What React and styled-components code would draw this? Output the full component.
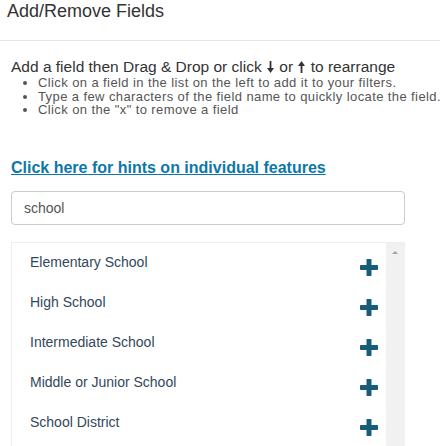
import React from 'react';
import styled, { createGlobalStyle } from 'styled-components';

const GlobalStyle = createGlobalStyle`
  body {
    margin: 0;
    background: #fff;
    font-family: "Liberation Sans", Arial, sans-serif;
  }
`;

const Page = styled.div`
  width: 440px;
  height: 446px;
  overflow: hidden;
`;

const Header = styled.div`
  height: 39px;
  padding: 1px 0 0 7px;
  border-bottom: 1px solid #e5e5e5;
`;

const Title = styled.h2`
  margin: 0;
  font-size: 18px;
  font-weight: normal;
  color: #333;
`;

const Body = styled.div`
  padding: 17px 0 0 11px;
`;

const Lead = styled.div`
  font-size: 15.5px;
  line-height: 18px;
  color: #333;
  white-space: nowrap;
`;

const Arrow = styled.svg`
  width: 7px;
  height: 12px;
  margin: 0 1px;
  vertical-align: -1px;
  fill: #333;
`;

const Hints = styled.ul`
  margin: 0;
  padding-left: 27px;
  font-size: 13px;
  line-height: 13.6px;
  letter-spacing: 0.4px;
  color: #555;
  white-space: nowrap;
`;

const Link = styled.a`
  display: block;
  margin-top: 42px;
  font-size: 16px;
  line-height: 18px;
  font-weight: bold;
  color: #0b78a8;
  text-decoration: underline;
`;

const Search = styled.input`
  display: block;
  box-sizing: border-box;
  width: 394px;
  height: 34px;
  margin-top: 14px;
  padding: 0 12px;
  border: 1px solid #ccc;
  border-radius: 4px;
  font-family: inherit;
  font-size: 14px;
  color: #555;
  outline: none;
`;

const ListBox = styled.div`
  display: flex;
  width: 394px;
  height: 240px;
  margin-top: 17px;
  box-sizing: border-box;
  border: 1px solid #eee;
`;

const Items = styled.div`
  flex: 1;
`;

const Row = styled.div`
  display: flex;
  justify-content: space-between;
  align-items: flex-start;
  height: 40px;
  padding: 0 8px 0 18px;
`;

const Name = styled.span`
  margin-top: 11px;
  font-size: 14px;
  line-height: 16px;
  color: #33475b;
`;

const Plus = styled.svg`
  margin-top: 16px;
  width: 18px;
  height: 17px;
  fill: #175d78;
`;

const Scrollbar = styled.div`
  width: 18px;
  background: #f1f1f1;
  display: flex;
  justify-content: center;
  padding-top: 8px;
  box-sizing: border-box;
`;

const UpArrow = styled.div`
  width: 0;
  height: 0;
  border-left: 3.5px solid transparent;
  border-right: 3.5px solid transparent;
  border-bottom: 3.5px solid #a3a3a3;
`;

const fields = [
  'Elementary School',
  'High School',
  'Intermediate School',
  'Middle or Junior School',
  'School District',
];

function PlusIcon() {
  return (
    <Plus viewBox="0 0 18 17">
      <rect x="6.5" y="0" width="5" height="17" rx="0.8" />
      <rect x="0" y="6" width="18" height="5" rx="0.8" />
    </Plus>
  );
}

function LongArrow({ up }) {
  return (
    <Arrow viewBox="0 0 7 12">
      <g transform={up ? 'rotate(180 3.5 6)' : undefined}>
        <rect x="2.6" y="0" width="1.8" height="8" />
        <path d="M0 7 L7 7 L3.5 12 Z" />
      </g>
    </Arrow>
  );
}

export default function App() {
  return (
    <Page>
      <GlobalStyle />
      <Header>
        <Title>Add/Remove Fields</Title>
      </Header>
      <Body>
        <Lead>
          Add a field then Drag &amp; Drop or click <LongArrow /> or <LongArrow up /> to rearrange
        </Lead>
        <Hints>
          <li>Click on a field in the list on the left to add it to your filters.</li>
          <li>Type a few characters of the field name to quickly locate the field.</li>
          <li>Click on the "x" to remove a field</li>
        </Hints>
        <Link href="#">Click here for hints on individual features</Link>
        <Search defaultValue="school" />
        <ListBox>
          <Items>
            {fields.map((f) => (
              <Row key={f}>
                <Name>{f}</Name>
                <PlusIcon />
              </Row>
            ))}
          </Items>
          <Scrollbar>
            <UpArrow />
          </Scrollbar>
        </ListBox>
      </Body>
    </Page>
  );
}
